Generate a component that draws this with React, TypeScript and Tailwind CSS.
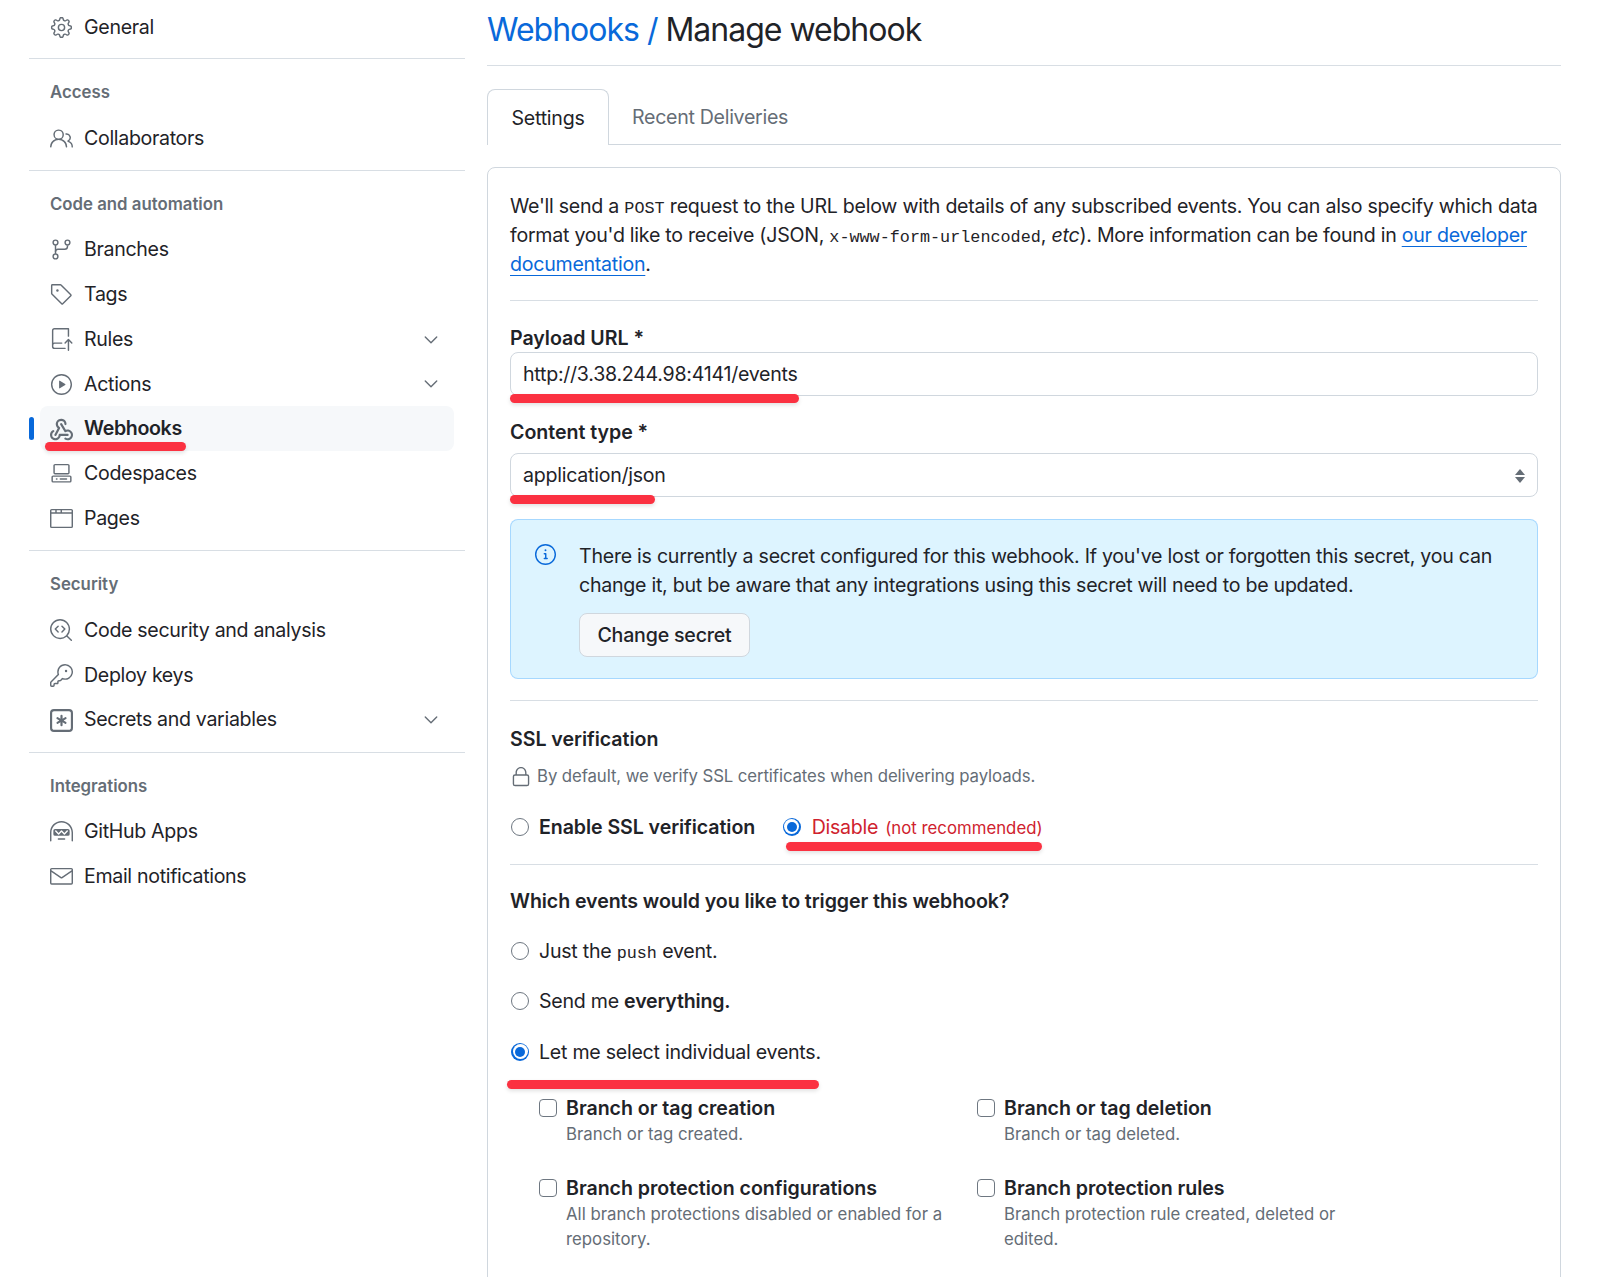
import React from "react";
import {
  GoGear, GoPeople, GoGitBranch, GoTag, GoRepoPush, GoPlay, GoCodespaces, GoBrowser,
  GoCodescan, GoKey, GoHubot, GoMail, GoChevronDown, GoInfo, GoLock,
} from "react-icons/go";

type IconT = React.ComponentType<{ size?: number; className?: string }>;

function GoWebhook({ size = 16, className }: { size?: number; className?: string }) {
  return (
    <svg width={size} height={size} viewBox="0 0 16 16" fill="currentColor" className={className}>
      <path d="M5.5 4.25a2.25 2.25 0 0 1 4.5 0 .75.75 0 0 0 1.5 0 3.75 3.75 0 1 0-6.14 2.889l-2.272 4.258a.75.75 0 0 0 1.324.706L7 7.25a.75.75 0 0 0-.309-1.015A2.25 2.25 0 0 1 5.5 4.25Z" />
      <path d="M7.364 3.607a.75.75 0 0 1 1.03.257l2.608 4.349a3.75 3.75 0 1 1-.628 6.785.75.75 0 0 1 .752-1.299 2.25 2.25 0 1 0-.033-3.88.75.75 0 0 1-1.03-.256L7.107 4.636a.75.75 0 0 1 .257-1.03Z" />
      <path d="M2.9 8.776A.75.75 0 0 1 2.625 9.8 2.25 2.25 0 1 0 6 11.75a.75.75 0 0 1 .75-.751h5.5a.75.75 0 0 1 0 1.5H7.425a3.751 3.751 0 1 1-5.55-3.998.75.75 0 0 1 1.024.274Z" />
    </svg>
  );
}

function GoKeyAsterisk({ size = 16, className }: { size?: number; className?: string }) {
  return (
    <svg width={size} height={size} viewBox="0 0 16 16" fill="currentColor" className={className}>
      <path d="M0 2.75A2.75 2.75 0 0 1 2.75 0h10.5A2.75 2.75 0 0 1 16 2.75v10.5A2.75 2.75 0 0 1 13.25 16H2.75A2.75 2.75 0 0 1 0 13.25ZM2.75 1.5c-.69 0-1.25.56-1.25 1.25v10.5c0 .69.56 1.25 1.25 1.25h10.5c.69 0 1.25-.56 1.25-1.25V2.75c0-.69-.56-1.25-1.25-1.25Z" />
      <path d="M8 4a.75.75 0 0 1 .75.75V6.7l1.69-.975a.75.75 0 0 1 .75 1.3L9.5 8l1.69.976a.75.75 0 0 1-.75 1.298L8.75 9.3v1.951a.75.75 0 0 1-1.5 0V9.299l-1.69.975a.75.75 0 0 1-.75-1.298L6.5 8l-1.69-.975a.75.75 0 0 1 .75-1.3l1.69.976V4.75A.75.75 0 0 1 8 4Z" />
    </svg>
  );
}

function Nav({ icon: Icon, label, chevron, active }: { icon: IconT; label: string; chevron?: boolean; active?: boolean }) {
  return (
    <div className="relative h-[44.8px] pt-[2px] flex items-center pl-[21px] pr-[21px] text-[19.6px] tracking-[-0.33px] text-[#1f2328]">
      {active && (
        <>
          <div className="absolute left-[11px] right-[11px] top-0 bottom-0 rounded-lg bg-[#f6f8fa]" />
          <div className="absolute left-0 top-[11px] h-[23px] w-[5px] rounded-md bg-[#0969da]" />
        </>
      )}
      <Icon size={23} className="relative shrink-0 text-[#656d76]" />
      <span className={`relative ml-[11px] flex-1 ${active ? "font-semibold tracking-[-0.35px]" : ""}`}>{label}</span>
      {chevron && <GoChevronDown size={22} className="relative text-[#656d76] mr-[2px]" />}
      {active && <Mark className="left-[16px] top-[36.5px] w-[141px]" />}
    </div>
  );
}

function Mark({ className }: { className: string }) {
  return <div className={`absolute h-[9px] rounded-full bg-[#fb3141] shadow-[0_2px_4px_rgba(0,0,0,0.12)] ${className}`} />;
}

function Heading({ children }: { children: React.ReactNode }) {
  return <div className="h-[28px] leading-[29px] pl-[21px] mt-[19px] mb-[9px] text-[16.8px] font-semibold text-[#656d76]">{children}</div>;
}

function Divider({ className = "" }: { className?: string }) {
  return <div className={`h-px bg-[#d8dee4] ${className}`} />;
}

function Radio({ checked }: { checked?: boolean }) {
  return checked ? (
    <span className="shrink-0 ml-px h-[18px] w-[18px] rounded-full bg-[#0969da] flex items-center justify-center">
      <span className="h-[15px] w-[15px] rounded-full bg-white flex items-center justify-center">
        <span className="h-[10px] w-[10px] rounded-full bg-[#0969da]" />
      </span>
    </span>
  ) : (
    <span className="shrink-0 ml-px h-[18px] w-[18px] rounded-full border border-[#6e7781] bg-white" />
  );
}

function EventBox({ title, desc }: { title: string; desc: React.ReactNode }) {
  return (
    <div className="flex gap-[9px]">
      <span className="shrink-0 mt-[5px] h-[18px] w-[18px] rounded-[4px] border border-[#6e7781] bg-white" />
      <div>
        <div className="h-[28px] leading-[28px] text-[19.6px] tracking-[-0.04px] font-semibold text-[#1f2328]">{title}</div>
        <div className="text-[16.8px] leading-[25px] text-[#656d76]">{desc}</div>
      </div>
    </div>
  );
}

export default function App() {
  return (
    <div className="h-[1277px] overflow-hidden bg-white flex pl-[29px] pr-[39px] gap-[22px] font-['Inter','Liberation_Sans',sans-serif] text-[#1f2328]">
      <aside className="w-[436px] shrink-0 pt-[4px]">
        <Nav icon={GoGear} label="General" />
        <Divider className="mt-[9px]" />
        <Heading>Access</Heading>
        <Nav icon={GoPeople} label="Collaborators" />
        <Divider className="mt-[10px]" />
        <Heading>Code and automation</Heading>
        <Nav icon={GoGitBranch} label="Branches" />
        <Nav icon={GoTag} label="Tags" />
        <Nav icon={GoRepoPush} label="Rules" chevron />
        <Nav icon={GoPlay} label="Actions" chevron />
        <Nav icon={GoWebhook} label="Webhooks" active />
        <Nav icon={GoCodespaces} label="Codespaces" />
        <Nav icon={GoBrowser} label="Pages" />
        <Divider className="mt-[10px]" />
        <Heading>Security</Heading>
        <Nav icon={GoCodescan} label="Code security and analysis" />
        <Nav icon={GoKey} label="Deploy keys" />
        <Nav icon={GoKeyAsterisk} label="Secrets and variables" chevron />
        <Divider className="mt-[10px]" />
        <Heading>Integrations</Heading>
        <Nav icon={GoHubot} label="GitHub Apps" />
        <Nav icon={GoMail} label="Email notifications" />
      </aside>

      <main className="flex-1 min-w-0 text-[19.6px] tracking-[-0.26px]">
        <h1 className="h-[66px] pt-[8px] border-b border-[#d8dee4] text-[32px] tracking-[-1px] leading-[44px] font-normal">
          <span className="text-[#0969da]">Webhooks /</span> Manage webhook
        </h1>
        <div className="mt-[23px] h-[56px] flex border-b border-[#d0d7de]">
          <div className="h-[56px] w-[122px] pt-[2px] bg-white border border-b-0 border-[#d0d7de] rounded-t-lg flex items-center justify-center">Settings</div>
          <div className="ml-[23px] h-[55px] pt-[3px] flex items-center text-[#656d76] tracking-[-0.3px]">Recent Deliveries</div>
        </div>

        <section className="mt-[22px] border border-[#d0d7de] rounded-lg h-[1200px] px-[22px] pt-[24px]">
          <p className="leading-[29.2px]">
            We'll send a <code className="font-['Liberation_Mono',monospace] text-[16.8px] leading-none tracking-normal">POST</code> request to the URL below with details of any subscribed events. You can also specify which data format you'd like to receive (JSON, <code className="font-['Liberation_Mono',monospace] text-[16.8px] leading-none tracking-normal">x-www-form-urlencoded</code>, <em>etc</em>). More information can be found in <span className="text-[#0969da] underline underline-offset-[4px]">our developer documentation</span>.
          </p>
          <Divider className="mt-[20px]" />

          <div className="mt-[23px] h-[28px] leading-[28px] tracking-[-0.04px] font-semibold">Payload URL *</div>
          <div className="relative h-[44px] pt-[3px] border border-[#d0d7de] rounded-lg flex items-center px-[12px]">
            http://3.38.244.98:4141/events
            <Mark className="-left-px top-[41px] w-[289px]" />
          </div>

          <div className="mt-[22px] h-[28px] leading-[28px] tracking-[-0.04px] font-semibold">Content type *</div>
          <div className="relative mt-[7px] h-[44px] pt-[2px] border border-[#d0d7de] rounded-lg flex items-center justify-between pl-[12px] pr-[11px]">
            application/json
            <svg width="12" height="16" viewBox="0 0 12 16" className="text-[#656d76]" fill="currentColor">
              <path d="M6 1 11 7H1z" />
              <path d="M6 15 1 9h10z" />
            </svg>
            <Mark className="-left-px top-[41px] w-[145px]" />
          </div>

          <div className="mt-[22px] h-[160px] rounded-lg border border-[#54aeff66] bg-[#ddf4ff] flex pl-[23px] pt-[22px]">
            <GoInfo size={23} className="shrink-0 mt-[1px] text-[#0969da]" />
            <div className="ml-[22px] flex-1 pr-[20px]">
              <p className="leading-[29px]">There is currently a secret configured for this webhook. If you've lost or forgotten this secret, you can change it, but be aware that any integrations using this secret will need to be updated.</p>
              <button className="mt-[13px] h-[44px] w-[171px] pt-[2px] rounded-lg border border-[#d0d7de] bg-[#f6f8fa] font-medium tracking-[-0.2px] text-[#1f2328]">Change secret</button>
            </div>
          </div>

          <Divider className="mt-[21px]" />
          <div className="mt-[24px] h-[28px] leading-[28px] tracking-[-0.04px] font-semibold">SSL verification</div>
          <div className="mt-[12px] h-[24px] flex items-center text-[16.8px] tracking-[-0.1px] text-[#656d76]">
            <GoLock size={22} className="mr-[5px] text-[#656d76]" />
            By default, we verify SSL certificates when delivering payloads.
          </div>
          <div className="mt-[24px] h-[28px] flex items-center">
            <Radio />
            <span className="ml-[10px] pt-[2px] tracking-[-0.08px] font-semibold">Enable SSL verification</span>
            <span className="relative ml-[26.5px] flex items-center">
              <Radio checked />
              <span className="ml-[11px] pt-[2px] flex items-baseline">
                <span className="text-[#cf222e]">Disable</span>
                <span className="ml-[7px] text-[16.8px] tracking-normal text-[#cf222e]">(not recommended)</span>
              </span>
              <Mark className="left-[4px] top-[31px] w-[256px]" />
            </span>
          </div>
          <Divider className="mt-[23px]" />

          <div className="mt-[22px] h-[28px] leading-[28px] tracking-[-0.08px] font-semibold">Which events would you like to trigger this webhook?</div>

          <div className="mt-[22px] h-[28px] flex items-center gap-[10px]">
            <Radio />
            <span className="pt-[2px]">Just the <code className="font-['Liberation_Mono',monospace] text-[16.8px] leading-none tracking-normal">push</code> event.</span>
          </div>
          <div className="mt-[22.5px] h-[28px] flex items-center gap-[10px]">
            <Radio />
            <span className="pt-[2px]">Send me <b className="font-semibold tracking-[-0.2px]">everything.</b></span>
          </div>
          <div className="relative mt-[22.5px] h-[28px] flex items-center gap-[10px]">
            <Radio checked />
            <span className="pt-[2px]">Let me select individual events.</span>
            <Mark className="-left-[3px] top-[42px] w-[312px]" />
          </div>

          <div className="mt-[28.5px] ml-[29px] grid grid-cols-[438px_380px] gap-y-[26.5px] tracking-normal">
            <EventBox title="Branch or tag creation" desc="Branch or tag created." />
            <EventBox title="Branch or tag deletion" desc="Branch or tag deleted." />
            <EventBox title="Branch protection configurations" desc="All branch protections disabled or enabled for a repository." />
            <EventBox title="Branch protection rules" desc="Branch protection rule created, deleted or edited." />
          </div>
        </section>
      </main>
    </div>
  );
}
